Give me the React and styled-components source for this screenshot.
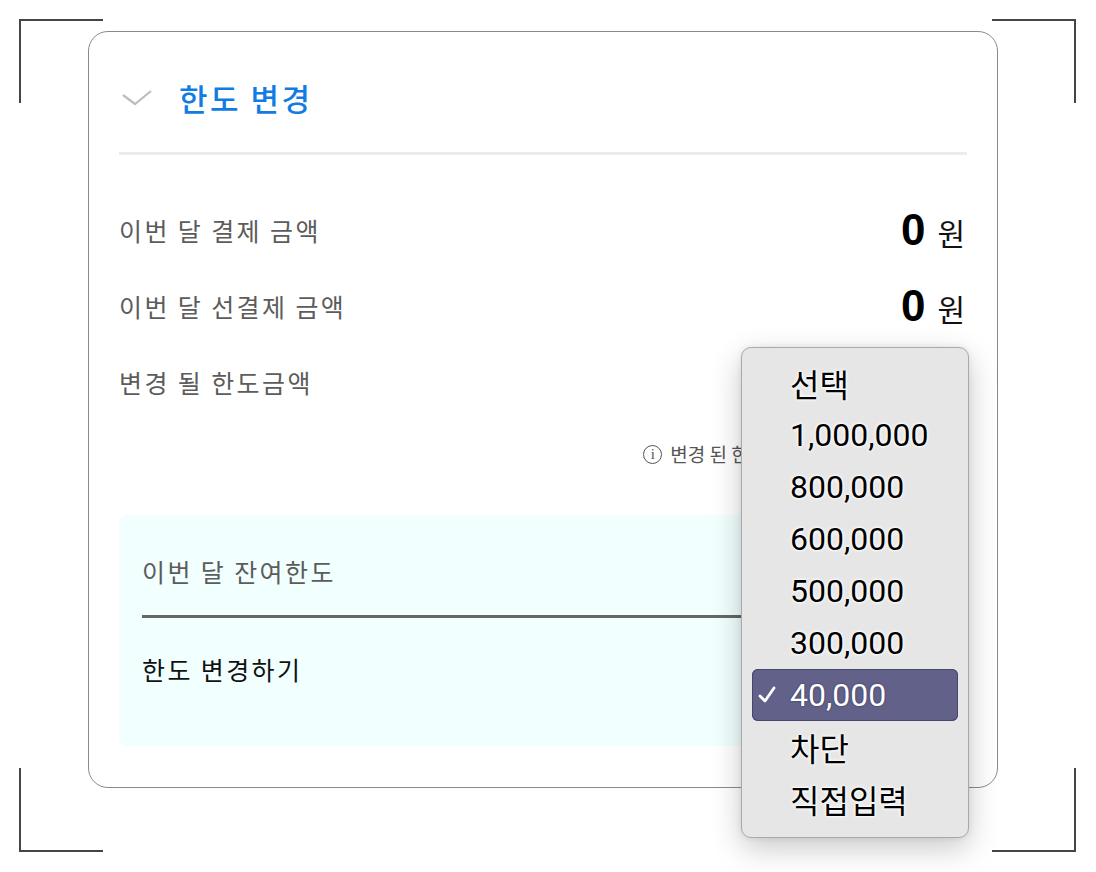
import React from 'react'
import styled, { createGlobalStyle } from 'styled-components'

const GlobalStyle = createGlobalStyle`
  body {
    margin: 0;
    background: #fff;
    font-family: "Noto Sans CJK KR", "Noto Sans", sans-serif;
  }
`

const Stage = styled.div`
  position: relative;
  width: 1096px;
  height: 872px;
  box-sizing: border-box;
  padding: 31px 98px 0 88px;
  overflow: hidden;
`

const Corner = styled.span`
  position: absolute;
  width: 84px;
  height: 84px;
  box-sizing: border-box;
  border: 0 solid #454545;
  ${p => (p.$v === 'top' ? 'top: 19px; border-top-width: 2px;' : 'top: 768px; border-bottom-width: 2px;')}
  ${p => (p.$h === 'left' ? 'left: 19px; border-left-width: 2px;' : 'left: 992px; border-right-width: 2px;')}
`

const Card = styled.section`
  box-sizing: border-box;
  width: 910px;
  height: 757px;
  border: 1.5px solid #8a8a8a;
  border-radius: 20px;
  padding: 0 30px;
  background: #fff;
`

const Header = styled.div`
  display: flex;
  align-items: center;
  gap: 26px;
  height: 123px;
  padding-top: 10px;
  box-sizing: border-box;
  border-bottom: 3px solid #ececec;
`

const Title = styled.h2`
  margin: 0;
  font-size: 31px;
  font-weight: 500;
  color: #137ce2;
  letter-spacing: 2.5px;
`

const Rows = styled.div`
  padding-top: 37px;
`

const Row = styled.div`
  display: flex;
  align-items: center;
  justify-content: space-between;
  height: 76px;
`

const Label = styled.span`
  font-size: 25px;
  letter-spacing: 2.4px;
  color: ${p => (p.$dark ? '#111' : '#5c5c5c')};
`

const Amount = styled.span`
  display: flex;
  align-items: baseline;
  gap: 12px;
  padding-right: 2px;
`

const Num = styled.b`
  font-family: "Liberation Sans", Arial, sans-serif;
  font-size: 44px;
  font-weight: 700;
  color: #000;
`

const Unit = styled.span`
  font-size: 30px;
  color: #111;
`

const Info = styled.div`
  display: flex;
  justify-content: flex-end;
  align-items: center;
  gap: 8px;
  margin-top: 22px;
  font-size: 19px;
  color: #555;
  line-height: 24px;
`

const InfoIcon = styled.span`
  display: inline-flex;
  align-items: center;
  justify-content: center;
  width: 17px;
  height: 17px;
  border: 1.5px solid #555;
  border-radius: 50%;
  font-family: "Liberation Serif", serif;
  font-size: 15px;
  line-height: 1;
`

const RemainBox = styled.div`
  margin-top: 49px;
  background: #f2ffff;
  border-radius: 8px;
  padding: 41px 23px 62px;
`

const BoxRow = styled.div`
  display: flex;
  align-items: center;
  line-height: 30px;
  padding-bottom: ${p => p.$pb || 0}px;
`

const Rule = styled.div`
  height: 3px;
  background: #666;
  margin-bottom: 36px;
`

const Menu = styled.ul`
  position: absolute;
  left: 741px;
  top: 347px;
  width: 228px;
  box-sizing: border-box;
  margin: 0;
  padding: 9px 10px 12px;
  list-style: none;
  background: #e6e6e6;
  border: 1px solid #a9a9a9;
  border-radius: 10px;
  box-shadow: 0 10px 30px rgba(0, 0, 0, 0.22), 0 0 6px rgba(0, 0, 0, 0.08);
`

const Item = styled.li`
  position: relative;
  display: flex;
  align-items: center;
  height: 52px;
  padding-left: 38px;
  box-sizing: border-box;
  font-family: Roboto, "Noto Sans CJK KR", sans-serif;
  font-size: 32px;
  font-weight: 400;
  border-radius: 6px;
  color: ${p => (p.$on ? '#fff' : '#000')};
  background: ${p => (p.$on ? '#616189' : 'transparent')};
  box-shadow: ${p => (p.$on ? 'inset 0 0 0 1px #45456e' : 'none')};
  text-shadow: ${p => (p.$on ? '0 0 2px #2c2c50' : '0 0 2px #fff, 0 0 3px #fff, 0 0 4px #fff')};
`

const Tick = styled.svg`
  position: absolute;
  left: 6px;
  top: 17px;
`

const options = ['선택', '1,000,000', '800,000', '600,000', '500,000', '300,000', '40,000', '차단', '직접입력']

const Chevron = () => (
  <svg width="34" height="20" viewBox="0 0 34 20">
    <polyline points="4,8 16,17 32,4" fill="none" stroke="#bdbdbd" strokeWidth="2.2" />
  </svg>
)

export default function App() {
  return (
    <Stage>
      <GlobalStyle />
      <Corner $v="top" $h="left" />
      <Corner $v="top" $h="right" />
      <Corner $v="bottom" $h="left" />
      <Corner $v="bottom" $h="right" />
      <Card>
        <Header>
          <Chevron />
          <Title>한도 변경</Title>
        </Header>
        <Rows>
          <Row>
            <Label>이번 달 결제 금액</Label>
            <Amount><Num>0</Num><Unit>원</Unit></Amount>
          </Row>
          <Row>
            <Label>이번 달 선결제 금액</Label>
            <Amount><Num>0</Num><Unit>원</Unit></Amount>
          </Row>
          <Row>
            <Label>변경 될 한도금액</Label>
          </Row>
        </Rows>
        <Info>
          <InfoIcon>i</InfoIcon>
          변경 된 한도는 다음날부터 적용됩니다
        </Info>
        <RemainBox>
          <BoxRow $pb={29}>
            <Label>이번 달 잔여한도</Label>
          </BoxRow>
          <Rule />
          <BoxRow>
            <Label $dark>한도 변경하기</Label>
          </BoxRow>
        </RemainBox>
      </Card>
      <Menu>
        {options.map(o => (
          <Item key={o} $on={o === '40,000'}>
            {o === '40,000' && (
              <Tick width="19" height="18" viewBox="0 0 19 18">
                <polyline points="2,10 7,15 16,2" fill="none" stroke="#fff" strokeWidth="2.8" strokeLinecap="round" strokeLinejoin="round" />
              </Tick>
            )}
            {o}
          </Item>
        ))}
      </Menu>
    </Stage>
  )
}
